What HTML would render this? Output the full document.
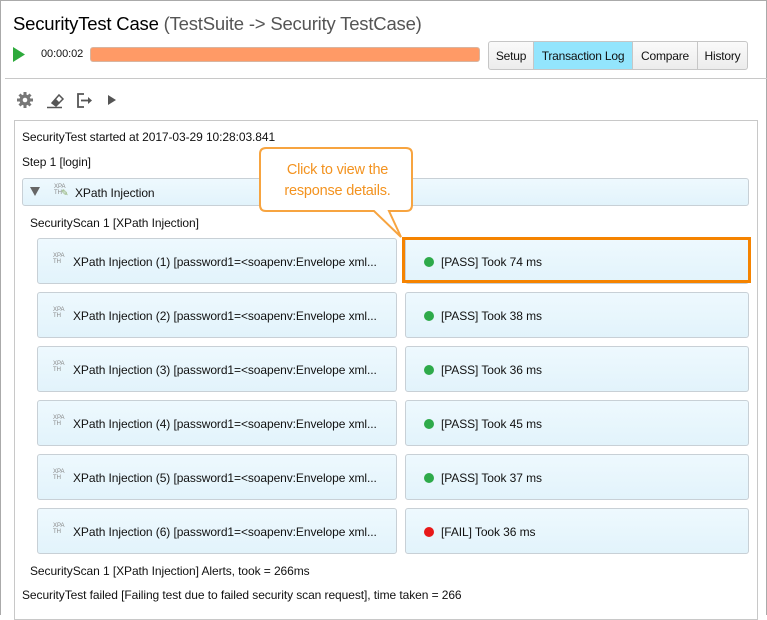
<!DOCTYPE html>
<html><head><style>
*{margin:0;padding:0;box-sizing:border-box}
body{width:767px;height:615px;background:#fff;font-family:"Liberation Sans","DejaVu Sans",sans-serif;font-size:12px;color:#111;position:relative;overflow:hidden}
.abs{position:absolute}
.frame{left:0;top:0;width:767px;height:615px;border:1px solid #aaa;border-bottom:none}
.t{position:absolute;white-space:nowrap;letter-spacing:-0.08px}
.box{position:absolute;border:1px solid #c8d0d6;border-radius:3px;background:linear-gradient(#eef9fe,#e2f3fb)}
.tab{position:absolute;top:41px;height:29px;line-height:28px;text-align:center;border:1px solid #c6c6c6;background:linear-gradient(#fafafa,#ececec);font-size:12px;letter-spacing:-0.2px}
.dot{position:absolute;width:10px;height:10px;border-radius:50%}
.xp{position:absolute;font-size:6px;color:#888;line-height:6px;letter-spacing:0}
</style></head><body>
<div class="abs frame"></div>
<div class="t" style="left:13px;top:13px;font-size:18.5px;color:#000;letter-spacing:-0.2px">SecurityTest Case <span style="color:#555">(TestSuite -&gt; Security TestCase)</span></div>
<svg class="abs" style="left:12px;top:47px" width="14" height="15"><polygon points="1,0 13,7.5 1,15" fill="#2eaa3c"/></svg>
<div class="t" style="left:41px;top:48px;font-size:11px">00:00:02</div>
<div class="abs" style="left:90px;top:47px;width:390px;height:15px;background:#ff9a66;border:1px solid #d8b5a0;border-radius:3px"></div>
<div class="tab" style="left:488px;width:46px;border-radius:3px 0 0 3px">Setup</div>
<div class="tab" style="left:533px;width:100px;background:#93e5fd">Transaction Log</div>
<div class="tab" style="left:632px;width:66px">Compare</div>
<div class="tab" style="left:697px;width:51px;border-radius:0 3px 3px 0">History</div>
<div class="abs" style="left:5px;top:78px;width:762px;height:1px;background:#c8c8c8"></div>
<svg class="abs" style="left:16px;top:91px" width="110" height="18">
<g fill="#777"><circle cx="9" cy="9" r="5.5"/><g stroke="#777" stroke-width="3"><line x1="9" y1="1" x2="9" y2="17"/><line x1="1" y1="9" x2="17" y2="9"/><line x1="3.5" y1="3.5" x2="14.5" y2="14.5"/><line x1="14.5" y1="3.5" x2="3.5" y2="14.5"/></g><circle cx="9" cy="9" r="2.3" fill="#fff"/></g>
<g fill="none" stroke="#555" stroke-width="1.5"><polygon points="36,12 43,4 47,8 40,15"/><line x1="31" y1="16.5" x2="46" y2="16.5"/></g>
<polygon points="36,12 40,8 44,12 40,15" fill="#555"/>
<g fill="none" stroke="#555" stroke-width="1.8"><polyline points="68,3 62,3 62,16 68,16"/><line x1="65" y1="9.5" x2="73" y2="9.5"/></g><polygon points="72,6 76,9.5 72,13" fill="#555"/>
<polygon points="92,4 100,9 92,14" fill="#555"/>
</svg>
<div class="abs" style="left:14px;top:120px;width:744px;height:500px;border:1px solid #c8c8c8"></div>
<div class="t" style="left:22px;top:130px">SecurityTest started at 2017-03-29 10:28:03.841</div>
<div class="t" style="left:22px;top:155px">Step 1 [login]</div>
<div class="box" style="left:22px;top:178px;width:727px;height:28px"></div>
<svg class="abs" style="left:30px;top:187px" width="10" height="9"><polygon points="0,0 10,0 5,9" fill="#666"/></svg>
<div class="xp" style="left:54px;top:184px">XPA<br>TH</div><div class="t" style="left:61px;top:188px;font-size:9px;color:#8a6">✎</div>
<div class="t" style="left:75px;top:186px">XPath Injection</div>
<div class="t" style="left:30px;top:216px">SecurityScan 1 [XPath Injection]</div>

<div class="box" style="left:37px;top:238px;width:360px;height:46px"></div><div class="box" style="left:405px;top:238px;width:344px;height:46px"></div>
<div class="box" style="left:37px;top:292px;width:360px;height:46px"></div><div class="box" style="left:405px;top:292px;width:344px;height:46px"></div>
<div class="box" style="left:37px;top:346px;width:360px;height:46px"></div><div class="box" style="left:405px;top:346px;width:344px;height:46px"></div>
<div class="box" style="left:37px;top:400px;width:360px;height:46px"></div><div class="box" style="left:405px;top:400px;width:344px;height:46px"></div>
<div class="box" style="left:37px;top:454px;width:360px;height:46px"></div><div class="box" style="left:405px;top:454px;width:344px;height:46px"></div>
<div class="box" style="left:37px;top:508px;width:360px;height:46px"></div><div class="box" style="left:405px;top:508px;width:344px;height:46px"></div>

<div class="xp" style="left:53px;top:253px">XPA<br>TH</div><div class="t" style="left:73px;top:255px">XPath Injection (1) [password1=&lt;soapenv:Envelope xml...</div>
<div class="xp" style="left:53px;top:307px">XPA<br>TH</div><div class="t" style="left:73px;top:309px">XPath Injection (2) [password1=&lt;soapenv:Envelope xml...</div>
<div class="xp" style="left:53px;top:361px">XPA<br>TH</div><div class="t" style="left:73px;top:363px">XPath Injection (3) [password1=&lt;soapenv:Envelope xml...</div>
<div class="xp" style="left:53px;top:415px">XPA<br>TH</div><div class="t" style="left:73px;top:417px">XPath Injection (4) [password1=&lt;soapenv:Envelope xml...</div>
<div class="xp" style="left:53px;top:469px">XPA<br>TH</div><div class="t" style="left:73px;top:471px">XPath Injection (5) [password1=&lt;soapenv:Envelope xml...</div>
<div class="xp" style="left:53px;top:523px">XPA<br>TH</div><div class="t" style="left:73px;top:525px">XPath Injection (6) [password1=&lt;soapenv:Envelope xml...</div>

<div class="dot" style="left:424px;top:257px;background:#2eaa4a"></div><div class="t" style="left:441px;top:255px">[PASS] Took 74 ms</div>
<div class="dot" style="left:424px;top:311px;background:#2eaa4a"></div><div class="t" style="left:441px;top:309px">[PASS] Took 38 ms</div>
<div class="dot" style="left:424px;top:365px;background:#2eaa4a"></div><div class="t" style="left:441px;top:363px">[PASS] Took 36 ms</div>
<div class="dot" style="left:424px;top:419px;background:#2eaa4a"></div><div class="t" style="left:441px;top:417px">[PASS] Took 45 ms</div>
<div class="dot" style="left:424px;top:473px;background:#2eaa4a"></div><div class="t" style="left:441px;top:471px">[PASS] Took 37 ms</div>
<div class="dot" style="left:424px;top:527px;background:#e81818"></div><div class="t" style="left:441px;top:525px">[FAIL] Took 36 ms</div>

<div class="abs" style="left:402px;top:237px;width:349px;height:46px;border:3px solid #f58300"></div>

<svg class="abs" style="left:258px;top:146px" width="160" height="94">
<path d="M8,2 H148 Q154,2 154,8 V59 Q154,65 148,65 H131 L143,91 L116,65 H8 Q2,65 2,59 V8 Q2,2 8,2 Z" fill="#fff" stroke="#f7a440" stroke-width="2"/>
</svg>
<div class="t" style="left:261px;top:160px;width:153px;text-align:center;color:#f39320;font-size:14.5px;line-height:21px;letter-spacing:-0.2px">Click to view the<br>response details.</div>

<div class="t" style="left:30px;top:564px">SecurityScan 1 [XPath Injection] Alerts, took = 266ms</div>
<div class="t" style="left:22px;top:588px">SecurityTest failed [Failing test due to failed security scan request], time taken = 266</div>
</body></html>
